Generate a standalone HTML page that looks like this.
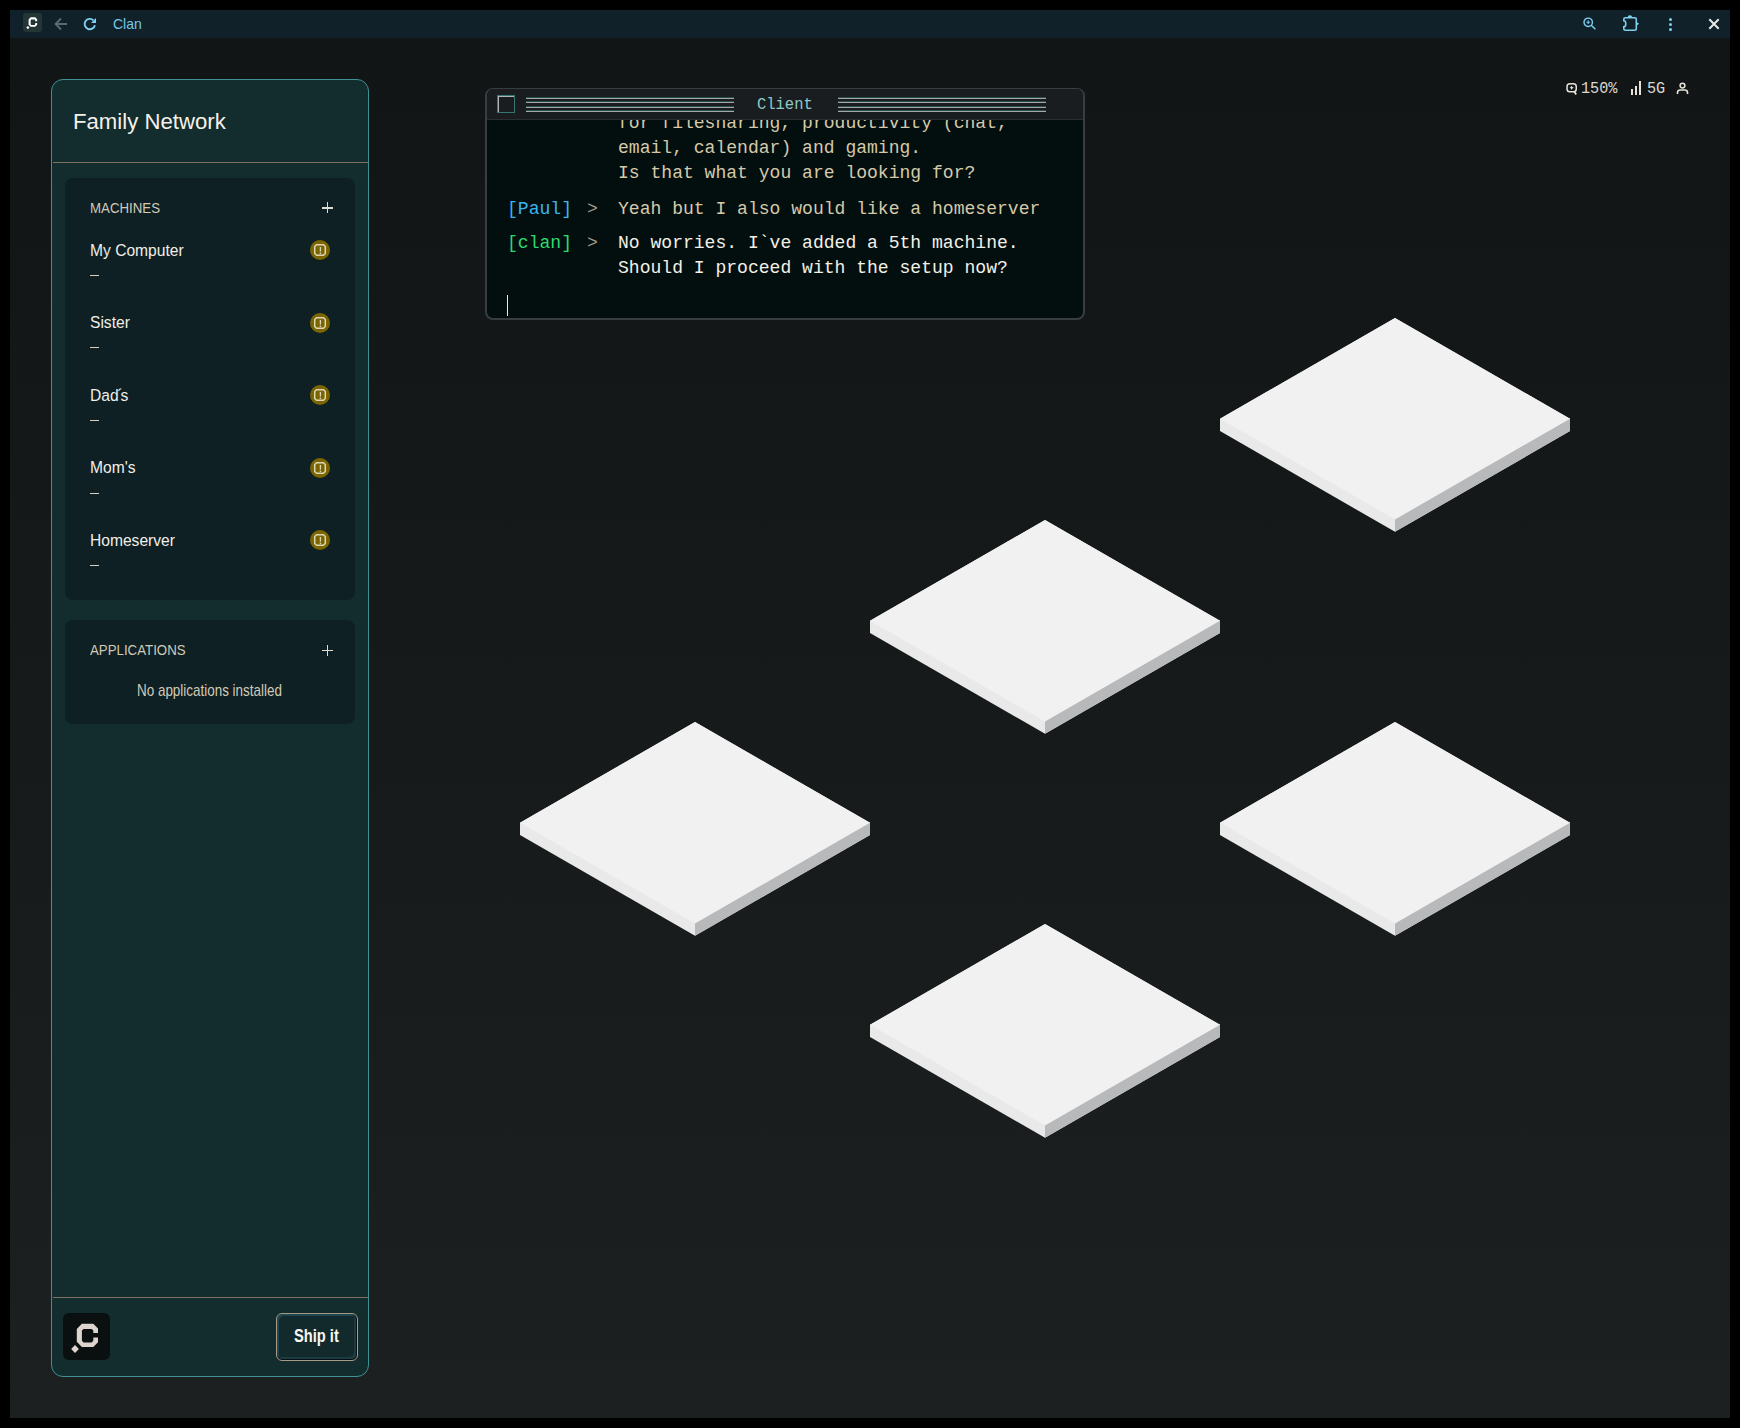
<!DOCTYPE html>
<html><head><meta charset="utf-8">
<style>
*{margin:0;padding:0;box-sizing:border-box}
html,body{width:1740px;height:1428px;overflow:hidden;background:#000;position:relative}
.t{position:absolute;white-space:nowrap}
</style></head><body>
<div class="t" style="left:10px;top:38px;width:1720px;height:1380px;background:linear-gradient(to bottom,#121516 0%,#171a1b 50%,#1c2021 100%)"></div>
<div class="t" style="left:10px;top:10px;width:1720px;height:28px;background:#10212a"></div>
<div class="t" style="left:23px;top:13px;width:19px;height:19px;background:#243535;border-radius:3px"></div>
<svg class="t" style="left:23px;top:13px" width="19" height="19" viewBox="0 0 47 47">
<polygon points="18.9,10.8 30.3,10.8 35,15.5 35,20.1 30.3,20.1 30.3,17.6 28.6,15.9 20.6,15.9 18.9,17.6 18.9,27.8 20.6,29.5 28.6,29.5 30.3,27.8 30.3,24.6 35,24.6 35,29.2 30.3,33.9 18.9,33.9 13.8,28.8 13.8,15.9" fill="#fff"/><polygon points="12,32 15.9,36 12,39.9 8.2,36" fill="#fff"/>
</svg>
<svg class="t" style="left:54px;top:17px" width="14" height="14" viewBox="0 0 14 14">
<path d="M13 7 L2 7 M7 1.5 L1.6 7 L7 12.5" fill="none" stroke="#5a6b72" stroke-width="1.9"/>
</svg>
<svg class="t" style="left:83px;top:17px" width="14" height="14" viewBox="0 0 14 14">
<path d="M11.9 8.2 A5.2 5.2 0 1 1 10.4 3.3" fill="none" stroke="#7dd0f0" stroke-width="1.9"/>
<path d="M13 1 L13 6 L8 6 Z" fill="#7dd0f0"/>
</svg>
<div class="t" style="left:113.00px;top:16.30px;font-size:15px;line-height:15px;font-family:'Liberation Sans',sans-serif;font-weight:400;color:#78c8e8;transform:scale(0.93,1.0);transform-origin:0 12.70px;">Clan</div>
<svg class="t" style="left:1582px;top:16px" width="16" height="16" viewBox="0 0 16 16">
<circle cx="6.2" cy="6.3" r="4.2" fill="none" stroke="#7dd0f0" stroke-width="1.4"/>
<path d="M9.2 9.3 L13.4 13.3" stroke="#7dd0f0" stroke-width="1.4"/>
<path d="M6.2 4.6 L6.2 8 M4.5 6.3 L7.9 6.3" stroke="#7dd0f0" stroke-width="1.1"/>
</svg>
<svg class="t" style="left:1621px;top:13px" width="20" height="20" viewBox="0 0 20 20">
<path d="M4.3 4.7 L13.8 4.7 Q15.3 4.7 15.3 6.2 L15.3 15.8 Q15.3 17.3 13.8 17.3 L4.3 17.3 Q2.8 17.3 2.8 15.8 L2.8 13.9 A2 3.1 0 0 0 2.8 7.7 L2.8 6.2 Q2.8 4.7 4.3 4.7 Z" fill="none" stroke="#7dd0f0" stroke-width="1.6"/>
<path d="M6.6 4.6 A2.3 2.3 0 0 1 11.2 4.6 Z" fill="#7dd0f0"/>
<path d="M15.5 8.9 L18.1 10.8 L15.5 12.7 Z" fill="#7dd0f0"/>
</svg>
<div class="t" style="left:1669px;top:18px;width:3px;height:3px;background:#7dd0f0;border-radius:50%"></div>
<div class="t" style="left:1669px;top:23px;width:3px;height:3px;background:#7dd0f0;border-radius:50%"></div>
<div class="t" style="left:1669px;top:28px;width:3px;height:3px;background:#7dd0f0;border-radius:50%"></div>
<svg class="t" style="left:1707px;top:17px" width="14" height="14" viewBox="0 0 14 14">
<path d="M2.3 2.3 L11.7 11.7 M11.7 2.3 L2.3 11.7" stroke="#e8e8e8" stroke-width="2"/>
</svg>
<svg class="t" style="left:1565px;top:81px" width="14" height="15" viewBox="0 0 14 15">
<rect x="2.05" y="2.65" width="9.2" height="8.2" rx="2.8" fill="none" stroke="#e6e2da" stroke-width="1.5"/>
<path d="M9.2 10.6 L11.2 13.6" stroke="#e6e2da" stroke-width="1.8"/>
<path d="M6.65 4.4 L7.3 6.1 L8.9 6.75 L7.3 7.4 L6.65 9.1 L6 7.4 L4.4 6.75 L6 6.1 Z" fill="#e6e2da"/>
</svg>
<div class="t" style="left:1580.50px;top:81.36px;font-size:16.5px;line-height:16.5px;font-family:'Liberation Mono',monospace;font-weight:400;color:#ddd9d0;transform:scale(0.92,1.0);transform-origin:0 12.64px;">150%</div>
<div class="t" style="left:1631px;top:89px;width:2px;height:6px;background:#e6e2da"></div>
<div class="t" style="left:1635px;top:86px;width:2px;height:9px;background:#e6e2da"></div>
<div class="t" style="left:1639px;top:81px;width:2px;height:14px;background:#e6e2da"></div>
<div class="t" style="left:1647.00px;top:81.36px;font-size:16.5px;line-height:16.5px;font-family:'Liberation Mono',monospace;font-weight:400;color:#ddd9d0;transform:scale(0.92,1.0);transform-origin:0 12.64px;">5G</div>
<svg class="t" style="left:1676px;top:82px" width="13" height="13" viewBox="0 0 13 13">
<circle cx="6.5" cy="3.6" r="2.4" fill="none" stroke="#e6e2da" stroke-width="1.5"/>
<path d="M1.5 12 L1.5 10.6 Q1.5 8 4.2 8 L8.8 8 Q11.5 8 11.5 10.6 L11.5 12" fill="none" stroke="#e6e2da" stroke-width="1.6"/>
</svg>
<div class="t" style="left:51px;top:79px;width:318px;height:1298px;background:#132c2e;border:1px solid #3d9294;border-radius:12px"></div>
<div class="t" style="left:53px;top:162px;width:315px;height:1px;background:#7f705f"></div>
<div class="t" style="left:73.00px;top:109.78px;font-size:22.7px;line-height:22.7px;font-family:'Liberation Sans',sans-serif;font-weight:400;color:#f4f1ea;transform:scale(0.977,1.0);transform-origin:0 19.22px;">Family Network</div>
<div class="t" style="left:65px;top:178px;width:290px;height:422px;background:#0e2023;border-radius:8px"></div>
<div class="t" style="left:90.00px;top:200.05px;font-size:15.3px;line-height:15.3px;font-family:'Liberation Sans',sans-serif;font-weight:400;color:#d2cab8;transform:scale(0.867,1.0);transform-origin:0 12.95px;">MACHINES</div>
<div class="t" style="left:322px;top:207.3px;width:11px;height:1.3px;background:#e0dcd2"></div><div class="t" style="left:326.85px;top:202.45000000000002px;width:1.3px;height:11px;background:#e0dcd2"></div>
<div class="t" style="left:90.00px;top:242.07px;font-size:17.4px;line-height:17.4px;font-family:'Liberation Sans',sans-serif;font-weight:400;color:#f1eee8;transform:scale(0.897,1.0);transform-origin:0 14.73px;">My Computer</div>
<div class="t" style="left:90px;top:275px;width:9px;height:1px;background:#d8d0c0"></div>
<svg class="t" style="left:310px;top:240px" width="20" height="20" viewBox="0 0 20 20">
<circle cx="10" cy="10" r="10" fill="#7a6500"/>
<path d="M6.5 4.7 L13.5 4.7 L15.3 6.5 L15.3 13.5 L13.5 15.3 L6.5 15.3 L4.7 13.5 L4.7 6.5 Z" fill="none" stroke="#ddd5b8" stroke-width="1.5"/>
<path d="M10.4 7 L10.4 11.6" stroke="#ddd5b8" stroke-width="1.3"/>
<rect x="9.7" y="12.6" width="1.4" height="1.4" fill="#ddd5b8"/>
</svg>
<div class="t" style="left:90.00px;top:314.07px;font-size:17.4px;line-height:17.4px;font-family:'Liberation Sans',sans-serif;font-weight:400;color:#f1eee8;transform:scale(0.897,1.0);transform-origin:0 14.73px;">Sister</div>
<div class="t" style="left:90px;top:347px;width:9px;height:1px;background:#d8d0c0"></div>
<svg class="t" style="left:310px;top:312.5px" width="20" height="20" viewBox="0 0 20 20">
<circle cx="10" cy="10" r="10" fill="#7a6500"/>
<path d="M6.5 4.7 L13.5 4.7 L15.3 6.5 L15.3 13.5 L13.5 15.3 L6.5 15.3 L4.7 13.5 L4.7 6.5 Z" fill="none" stroke="#ddd5b8" stroke-width="1.5"/>
<path d="M10.4 7 L10.4 11.6" stroke="#ddd5b8" stroke-width="1.3"/>
<rect x="9.7" y="12.6" width="1.4" height="1.4" fill="#ddd5b8"/>
</svg>
<div class="t" style="left:90.00px;top:386.87px;font-size:17.4px;line-height:17.4px;font-family:'Liberation Sans',sans-serif;font-weight:400;color:#f1eee8;transform:scale(0.897,1.0);transform-origin:0 14.73px;">Dad<span style="margin:0 -2.6px 0 -1.2px">&#180;</span>s</div>
<div class="t" style="left:90px;top:420px;width:9px;height:1px;background:#d8d0c0"></div>
<svg class="t" style="left:310px;top:385px" width="20" height="20" viewBox="0 0 20 20">
<circle cx="10" cy="10" r="10" fill="#7a6500"/>
<path d="M6.5 4.7 L13.5 4.7 L15.3 6.5 L15.3 13.5 L13.5 15.3 L6.5 15.3 L4.7 13.5 L4.7 6.5 Z" fill="none" stroke="#ddd5b8" stroke-width="1.5"/>
<path d="M10.4 7 L10.4 11.6" stroke="#ddd5b8" stroke-width="1.3"/>
<rect x="9.7" y="12.6" width="1.4" height="1.4" fill="#ddd5b8"/>
</svg>
<div class="t" style="left:90.00px;top:459.37px;font-size:17.4px;line-height:17.4px;font-family:'Liberation Sans',sans-serif;font-weight:400;color:#f1eee8;transform:scale(0.897,1.0);transform-origin:0 14.73px;">Mom's</div>
<div class="t" style="left:90px;top:493px;width:9px;height:1px;background:#d8d0c0"></div>
<svg class="t" style="left:310px;top:457.6px" width="20" height="20" viewBox="0 0 20 20">
<circle cx="10" cy="10" r="10" fill="#7a6500"/>
<path d="M6.5 4.7 L13.5 4.7 L15.3 6.5 L15.3 13.5 L13.5 15.3 L6.5 15.3 L4.7 13.5 L4.7 6.5 Z" fill="none" stroke="#ddd5b8" stroke-width="1.5"/>
<path d="M10.4 7 L10.4 11.6" stroke="#ddd5b8" stroke-width="1.3"/>
<rect x="9.7" y="12.6" width="1.4" height="1.4" fill="#ddd5b8"/>
</svg>
<div class="t" style="left:90.00px;top:531.87px;font-size:17.4px;line-height:17.4px;font-family:'Liberation Sans',sans-serif;font-weight:400;color:#f1eee8;transform:scale(0.897,1.0);transform-origin:0 14.73px;">Homeserver</div>
<div class="t" style="left:90px;top:565px;width:9px;height:1px;background:#d8d0c0"></div>
<svg class="t" style="left:310px;top:530px" width="20" height="20" viewBox="0 0 20 20">
<circle cx="10" cy="10" r="10" fill="#7a6500"/>
<path d="M6.5 4.7 L13.5 4.7 L15.3 6.5 L15.3 13.5 L13.5 15.3 L6.5 15.3 L4.7 13.5 L4.7 6.5 Z" fill="none" stroke="#ddd5b8" stroke-width="1.5"/>
<path d="M10.4 7 L10.4 11.6" stroke="#ddd5b8" stroke-width="1.3"/>
<rect x="9.7" y="12.6" width="1.4" height="1.4" fill="#ddd5b8"/>
</svg>
<div class="t" style="left:65px;top:620px;width:290px;height:104px;background:#0e2023;border-radius:8px"></div>
<div class="t" style="left:90.00px;top:642.30px;font-size:15px;line-height:15px;font-family:'Liberation Sans',sans-serif;font-weight:400;color:#d2cab8;transform:scale(0.884,1.0);transform-origin:0 12.70px;">APPLICATIONS</div>
<div class="t" style="left:322px;top:650px;width:11px;height:1.3px;background:#e0dcd2"></div><div class="t" style="left:326.85px;top:645.15px;width:1.3px;height:11px;background:#e0dcd2"></div>
<div class="t" style="left:137.30px;top:681.87px;font-size:16.1px;line-height:16.1px;font-family:'Liberation Sans',sans-serif;font-weight:400;color:#d2cab8;transform:scale(0.835,1.0);transform-origin:0 13.63px;">No applications installed</div>
<div class="t" style="left:53px;top:1297px;width:315px;height:1px;background:#7f705f"></div>
<div class="t" style="left:63px;top:1313px;width:47px;height:47px;background:#0a0f0f;border-radius:6px"></div>
<svg class="t" style="left:63px;top:1313px" width="47" height="47" viewBox="0 0 47 47">
<polygon points="18.9,10.8 30.3,10.8 35,15.5 35,20.1 30.3,20.1 30.3,17.6 28.6,15.9 20.6,15.9 18.9,17.6 18.9,27.8 20.6,29.5 28.6,29.5 30.3,27.8 30.3,24.6 35,24.6 35,29.2 30.3,33.9 18.9,33.9 13.8,28.8 13.8,15.9" fill="#ddd5cd"/><polygon points="12,32 15.9,36 12,39.9 8.2,36" fill="#ddd5cd"/>
</svg>
<div class="t" style="left:276px;top:1313px;width:82px;height:48px;background:#132a2d;border:1px solid #a89a84;border-radius:6px;box-shadow:inset 0 -1px 0 #061014, inset -1px 0 0 #061014, inset 2px 2px 0 #1e4650, inset -3px -3px 0 #1d3a42"></div>
<div class="t" style="left:294.30px;top:1328.04px;font-size:17.9px;line-height:17.9px;font-family:'Liberation Sans',sans-serif;font-weight:700;color:#f8f6f0;transform:scale(0.82,1.0);transform-origin:0 15.16px;">Ship it</div>
<div class="t" style="left:485px;top:88px;width:600px;height:232px;background:#020f0e;border:2px solid #383e40;border-top-width:1px;border-radius:8px"></div>
<div class="t" style="left:487px;top:89px;width:596px;height:30px;background:#1a1d20;border-radius:7px 7px 0 0"></div>
<div class="t" style="left:487px;top:119px;width:596px;height:1px;background:#2a2f31"></div>
<div class="t" style="left:497px;top:95px;width:18px;height:18px;border:1px solid #377570;box-shadow:inset 1px 1px 0 #b4b4b4"></div>
<div class="t" style="left:526px;top:98px;width:208px;height:1px;background:#a3a7a7;box-shadow:0 -1px 0 #2a4d4a"></div>
<div class="t" style="left:838px;top:98px;width:208px;height:1px;background:#a3a7a7;box-shadow:0 -1px 0 #2a4d4a"></div>
<div class="t" style="left:526px;top:102px;width:208px;height:1px;background:#a3a7a7;box-shadow:0 -1px 0 #2a4d4a"></div>
<div class="t" style="left:838px;top:102px;width:208px;height:1px;background:#a3a7a7;box-shadow:0 -1px 0 #2a4d4a"></div>
<div class="t" style="left:526px;top:107px;width:208px;height:1px;background:#a3a7a7;box-shadow:0 -1px 0 #2a4d4a"></div>
<div class="t" style="left:838px;top:107px;width:208px;height:1px;background:#a3a7a7;box-shadow:0 -1px 0 #2a4d4a"></div>
<div class="t" style="left:526px;top:111px;width:208px;height:1px;background:#a3a7a7;box-shadow:0 -1px 0 #2a4d4a"></div>
<div class="t" style="left:838px;top:111px;width:208px;height:1px;background:#a3a7a7;box-shadow:0 -1px 0 #2a4d4a"></div>
<div class="t" style="left:757.00px;top:98.10px;font-size:15.8px;line-height:15.8px;font-family:'Liberation Mono',monospace;font-weight:400;color:#8ecac8;transform:scale(0.98,1.0);transform-origin:0 12.10px;">Client</div>
<div class="t" style="left:487px;top:120px;width:596px;height:198px;overflow:hidden;border-radius:0 0 6px 6px"><div class="t" style="left:130.80px;top:-5.83px;font-size:19.1px;line-height:19.1px;font-family:'Liberation Mono',monospace;font-weight:400;color:#d6c9aa;transform:scale(0.945,1.0);transform-origin:0 14.63px;white-space:pre;">for filesharing, productivity (chat,</div><div class="t" style="left:130.80px;top:18.97px;font-size:19.1px;line-height:19.1px;font-family:'Liberation Mono',monospace;font-weight:400;color:#d6c9aa;transform:scale(0.945,1.0);transform-origin:0 14.63px;white-space:pre;">email, calendar) and gaming.</div><div class="t" style="left:130.80px;top:43.97px;font-size:19.1px;line-height:19.1px;font-family:'Liberation Mono',monospace;font-weight:400;color:#d6c9aa;transform:scale(0.945,1.0);transform-origin:0 14.63px;white-space:pre;">Is that what you are looking for?</div><div class="t" style="left:20.00px;top:79.87px;font-size:19.1px;line-height:19.1px;font-family:'Liberation Mono',monospace;font-weight:400;color:#3ab4f0;transform:scale(0.945,1.0);transform-origin:0 14.63px;white-space:pre;">[Paul]</div><div class="t" style="left:100.00px;top:79.87px;font-size:19.1px;line-height:19.1px;font-family:'Liberation Mono',monospace;font-weight:400;color:#a39b8a;transform:scale(0.945,1.0);transform-origin:0 14.63px;white-space:pre;">&gt;</div><div class="t" style="left:130.80px;top:79.87px;font-size:19.1px;line-height:19.1px;font-family:'Liberation Mono',monospace;font-weight:400;color:#d6c9aa;transform:scale(0.945,1.0);transform-origin:0 14.63px;white-space:pre;">Yeah but I also would like a homeserver</div><div class="t" style="left:20.00px;top:114.37px;font-size:19.1px;line-height:19.1px;font-family:'Liberation Mono',monospace;font-weight:400;color:#2ed870;transform:scale(0.945,1.0);transform-origin:0 14.63px;white-space:pre;">[clan]</div><div class="t" style="left:100.00px;top:114.37px;font-size:19.1px;line-height:19.1px;font-family:'Liberation Mono',monospace;font-weight:400;color:#a39b8a;transform:scale(0.945,1.0);transform-origin:0 14.63px;white-space:pre;">&gt;</div><div class="t" style="left:130.80px;top:114.37px;font-size:19.1px;line-height:19.1px;font-family:'Liberation Mono',monospace;font-weight:400;color:#f4f0e6;transform:scale(0.945,1.0);transform-origin:0 14.63px;white-space:pre;">No worries. I`ve added a 5th machine.</div><div class="t" style="left:130.80px;top:139.37px;font-size:19.1px;line-height:19.1px;font-family:'Liberation Mono',monospace;font-weight:400;color:#f4f0e6;transform:scale(0.945,1.0);transform-origin:0 14.63px;white-space:pre;">Should I proceed with the setup now?</div><div class="t" style="left:20px;top:175px;width:1px;height:21px;background:#e8e8e8"></div></div>
<svg class="t" style="left:0;top:0" width="1740" height="1428" viewBox="0 0 1740 1428"><polygon points="1395,318 1570,418.8 1570,431.1 1395,531.8 1220,431.1 1220,418.8" fill="#e9e9e9"/><polygon points="1570,417.8 1570,431.1 1395,531.8 1395,518.5" fill="#b8b9bb"/><polygon points="1395,318 1570,418.8 1395,519.5 1220,418.8" fill="#f1f1f1"/><polygon points="1045,520 1220,620.8 1220,633.0999999999999 1045,733.8 870,633.0999999999999 870,620.8" fill="#e9e9e9"/><polygon points="1220,619.8 1220,633.0999999999999 1045,733.8 1045,720.5" fill="#b8b9bb"/><polygon points="1045,520 1220,620.8 1045,721.5 870,620.8" fill="#f1f1f1"/><polygon points="695,722 870,822.8 870,835.0999999999999 695,935.8 520,835.0999999999999 520,822.8" fill="#e9e9e9"/><polygon points="870,821.8 870,835.0999999999999 695,935.8 695,922.5" fill="#b8b9bb"/><polygon points="695,722 870,822.8 695,923.5 520,822.8" fill="#f1f1f1"/><polygon points="1395,722 1570,822.8 1570,835.0999999999999 1395,935.8 1220,835.0999999999999 1220,822.8" fill="#e9e9e9"/><polygon points="1570,821.8 1570,835.0999999999999 1395,935.8 1395,922.5" fill="#b8b9bb"/><polygon points="1395,722 1570,822.8 1395,923.5 1220,822.8" fill="#f1f1f1"/><polygon points="1045,924 1220,1024.8 1220,1037.1 1045,1137.8 870,1037.1 870,1024.8" fill="#e9e9e9"/><polygon points="1220,1023.8 1220,1037.1 1045,1137.8 1045,1124.5" fill="#b8b9bb"/><polygon points="1045,924 1220,1024.8 1045,1125.5 870,1024.8" fill="#f1f1f1"/></svg>
</body></html>
